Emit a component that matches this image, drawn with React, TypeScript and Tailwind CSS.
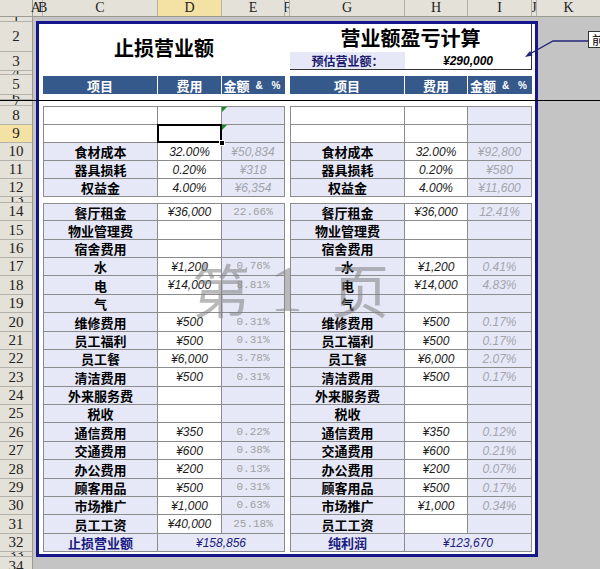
import React from 'react';

type RH = { n: string; h: string; sel?: boolean };

const h14 = [
  'h-[17px]', 'h-[19px]', 'h-[18px]', 'h-[18px]', 'h-[19px]', 'h-[18px]', 'h-[19px]', 'h-[18px]', 'h-[18px]', 'h-[19px]',
  'h-[18px]', 'h-[18px]', 'h-[19px]', 'h-[18px]', 'h-[19px]', 'h-[18px]', 'h-[18px]', 'h-[19px]', 'h-[18px]',
];
const rh14 = [
  'h-[18px]', 'h-[19px]', 'h-[18px]', 'h-[18px]', 'h-[19px]', 'h-[18px]', 'h-[19px]', 'h-[18px]', 'h-[18px]', 'h-[19px]',
  'h-[18px]', 'h-[18px]', 'h-[19px]', 'h-[18px]', 'h-[19px]', 'h-[18px]', 'h-[18px]', 'h-[19px]', 'h-[18px]',
];

const rowHeaders: RH[] = [
  { n: '1', h: 'h-[5px]' },
  { n: '2', h: 'h-[30px]' },
  { n: '3', h: 'h-[19px]' },
  { n: '4', h: 'h-[4px]' },
  { n: '5', h: 'h-[20px]' },
  { n: '6', h: 'h-[5px]' },
  { n: '7', h: 'h-[6px]' },
  { n: '8', h: 'h-[19px]' },
  { n: '9', h: 'h-[18px]', sel: true },
  { n: '10', h: 'h-[18px]' },
  { n: '11', h: 'h-[18px]' },
  { n: '12', h: 'h-[18px]' },
  { n: '13', h: 'h-[6px]' },
  ...rh14.map((h, i) => ({ n: String(14 + i), h })),
  { n: '33', h: 'h-[5px]' },
  { n: '34', h: 'h-[20px]' },
];

type Row = { c: string; d?: string; e?: string; h?: string; i?: string; mono?: boolean; cWhite?: boolean };

const block1: Row[] = [
  { c: '', cWhite: true },
  { c: '', cWhite: true },
  { c: '食材成本', d: '32.00%', e: '¥50,834', h: '32.00%', i: '¥92,800' },
  { c: '器具损耗', d: '0.20%', e: '¥318', h: '0.20%', i: '¥580' },
  { c: '权益金', d: '4.00%', e: '¥6,354', h: '4.00%', i: '¥11,600' },
];

const block2: Row[] = [
  { c: '餐厅租金', d: '¥36,000', e: '22.66%', h: '¥36,000', i: '12.41%', mono: true },
  { c: '物业管理费' },
  { c: '宿舍费用' },
  { c: '水', d: '¥1,200', e: '0.76%', h: '¥1,200', i: '0.41%', mono: true },
  { c: '电', d: '¥14,000', e: '8.81%', h: '¥14,000', i: '4.83%', mono: true },
  { c: '气' },
  { c: '维修费用', d: '¥500', e: '0.31%', h: '¥500', i: '0.17%', mono: true },
  { c: '员工福利', d: '¥500', e: '0.31%', h: '¥500', i: '0.17%', mono: true },
  { c: '员工餐', d: '¥6,000', e: '3.78%', h: '¥6,000', i: '2.07%', mono: true },
  { c: '清洁费用', d: '¥500', e: '0.31%', h: '¥500', i: '0.17%', mono: true },
  { c: '外来服务费' },
  { c: '税收' },
  { c: '通信费用', d: '¥350', e: '0.22%', h: '¥350', i: '0.12%', mono: true },
  { c: '交通费用', d: '¥600', e: '0.38%', h: '¥600', i: '0.21%', mono: true },
  { c: '办公费用', d: '¥200', e: '0.13%', h: '¥200', i: '0.07%', mono: true },
  { c: '顾客用品', d: '¥500', e: '0.31%', h: '¥500', i: '0.17%', mono: true },
  { c: '市场推广', d: '¥1,000', e: '0.63%', h: '¥1,000', i: '0.34%', mono: true },
  { c: '员工工资', d: '¥40,000', e: '25.18%', mono: true },
];

const LAV = 'bg-[#e6e8f8]';
const CJK = "font-['Noto_Sans_CJK_SC',sans-serif]";
const SANS = "font-['Liberation_Sans','Noto_Sans_CJK_SC',sans-serif]";
const MONO = "font-['Liberation_Mono',monospace]";
const SERIF = "font-['Liberation_Serif',serif]";

const labelCls = `${CJK} font-bold text-[13px] leading-none text-black`;
const dCls = `${SANS} italic text-[12px] leading-none text-[#1c1c1c]`;
const eItalic = `${SANS} italic text-[12px] leading-none text-[#a4a4ac]`;
const eMono = `${MONO} text-[11px] leading-none text-[#a0a0a0]`;

function Cell({ w, bg, children, extra }: { w: string; bg: string; children?: React.ReactNode; extra?: React.ReactNode }) {
  return (
    <div className={`relative ${w} ${bg} h-full flex items-center justify-center border-r border-[#8c8c8c]`}>
      {children}
      {extra}
    </div>
  );
}

const Tri = () => (
  <div className="absolute left-0 top-0 w-0 h-0 border-t-[5px] border-t-[#1a8c2a] border-r-[5px] border-r-transparent" />
);

const Sel = () => (
  <>
    <div className="absolute left-[-1px] top-[-1px] right-[-1px] bottom-[-1px] border-2 border-black z-10" />
    <div className="absolute right-[-4px] bottom-[-4px] w-[6px] h-[6px] bg-black border border-white z-20" />
  </>
);

function LeftRow({ r, h, idx, block }: { r: Row; h: string; idx: number; block: number }) {
  const isSel = block === 1 && idx === 1;
  const hasTri = block === 1 && (idx === 0 || idx === 1);
  return (
    <div className={`flex ${h} border-b border-[#8c8c8c]`}>
      <Cell w="w-[114px]" bg={r.cWhite ? 'bg-white' : LAV}>
        <span className={labelCls}>{r.c}</span>
      </Cell>
      <Cell w="w-[64px]" bg="bg-white" extra={isSel ? <Sel /> : null}>
        <span className={dCls}>{r.d}</span>
      </Cell>
      <Cell w="w-[63px]" bg={LAV} extra={hasTri ? <Tri /> : null}>
        <span className={r.mono ? eMono : eItalic}>{r.e}</span>
      </Cell>
    </div>
  );
}

function RightRow({ r, h }: { r: Row; h: string }) {
  return (
    <div className={`flex ${h} border-b border-[#8c8c8c]`}>
      <Cell w="w-[114px]" bg={r.cWhite ? 'bg-white' : LAV}>
        <span className={labelCls}>{r.c}</span>
      </Cell>
      <Cell w="w-[63px]" bg="bg-white">
        <span className={dCls}>{r.h}</span>
      </Cell>
      <Cell w="w-[64px]" bg={LAV}>
        <span className={eItalic}>{r.i}</span>
      </Cell>
    </div>
  );
}

function HeaderBlock({ right }: { right?: boolean }) {
  const hc = `${CJK} font-bold text-[13px] leading-none text-white`;
  return (
    <div className="flex w-[242px] h-full bg-[#36598c]">
      <div className="w-[115px] h-full flex items-center justify-center border-r border-white">
        <span className={hc}>项目</span>
      </div>
      <div className={`${right ? 'w-[63px]' : 'w-[64px]'} h-full flex items-center justify-center border-r border-white`}>
        <span className={hc}>费用</span>
      </div>
      <div className="flex-1 h-full flex items-center justify-center">
        <span className={hc}>金额</span>
        <span className={`${SANS} font-bold text-[10px] text-white ml-[6px] tracking-[3px]`}>&amp; %</span>
      </div>
    </div>
  );
}

export default function App() {
  const colHdr = `${SERIF} text-[14px] leading-none text-[#222]`;
  return (
    <div className={`relative w-[600px] h-[569px] overflow-hidden bg-[#c4c4c4] ${SANS}`}>
      {/* column headers */}
      <div className="flex h-[17px] bg-[#e3e1d8] border-b border-[#9c9a90]">
        <div className="w-[33px] h-full border-r border-[#9c9a90]" />
        <div className={`w-[10px] h-full border-r border-[#b4b2a8] flex items-center justify-center overflow-visible ${colHdr} tracking-[-3px]`}>AB</div>
        <div className={`w-[115px] h-full border-r border-[#b4b2a8] flex items-center justify-center ${colHdr}`}>C</div>
        <div className={`w-[64px] h-full border-r border-[#b4b2a8] bg-[#f4e2a4] flex items-center justify-center ${colHdr}`}>D</div>
        <div className={`w-[63px] h-full border-r border-[#b4b2a8] flex items-center justify-center ${colHdr}`}>E</div>
        <div className={`w-[5px] h-full border-r border-[#b4b2a8] flex items-center justify-center overflow-hidden ${colHdr}`}>F</div>
        <div className={`w-[115px] h-full border-r border-[#b4b2a8] flex items-center justify-center ${colHdr}`}>G</div>
        <div className={`w-[63px] h-full border-r border-[#b4b2a8] flex items-center justify-center ${colHdr}`}>H</div>
        <div className={`w-[64px] h-full border-r border-[#b4b2a8] flex items-center justify-center ${colHdr}`}>I</div>
        <div className={`w-[5px] h-full border-r border-[#b4b2a8] flex items-center justify-center overflow-hidden ${colHdr}`}>J</div>
        <div className={`flex-1 h-full flex items-center justify-center ${colHdr}`}>K</div>
      </div>

      <div className="flex">
        {/* row headers */}
        <div className="w-[33px] flex flex-col bg-[#e3e1d8] border-r border-[#9c9a90]">
          {rowHeaders.map((r) => (
            <div
              key={r.n}
              className={`${r.h} shrink-0 flex items-center justify-center overflow-hidden border-b border-[#b4b2a8] ${r.sel ? 'bg-[#f4e2a4]' : ''} ${SERIF} text-[15px] leading-none text-[#222]`}
            >
              {r.n}
            </div>
          ))}
        </div>

        {/* sheet */}
        <div className="flex-1 pl-[3px] pt-[4px]">
          <div className="w-[502px] h-[536px] border-[3px] border-[#16168c] bg-white pl-[4px] flex flex-col">
            {/* titles */}
            <div className="flex h-[46px] shrink-0">
              <div className="w-[242px] h-full flex items-center justify-center pt-[2px]">
                <span className={`${CJK} font-bold text-[20px] leading-none text-black`}>止损营业额</span>
              </div>
              <div className="w-[5px]" />
              <div className="w-[242px] h-full flex flex-col border-r border-b border-[#333]">
                <div className="h-[28px] flex items-center justify-center">
                  <span className={`${CJK} font-bold text-[20px] leading-none text-black`}>营业额盈亏计算</span>
                </div>
                <div className="flex-1 flex">
                  <div className={`w-[115px] h-full ${LAV} flex items-center justify-center`}>
                    <span className={`${CJK} font-bold text-[12px] leading-none text-[#1a1a70]`}>预估营业额：</span>
                  </div>
                  <div className="flex-1 h-full flex items-center justify-center">
                    <span className={`${SANS} font-bold italic text-[12px] leading-none text-black`}>¥290,000</span>
                  </div>
                </div>
              </div>
            </div>
            <div className="h-[6px] shrink-0" />
            {/* header row */}
            <div className="flex h-[18px] shrink-0">
              <HeaderBlock />
              <div className="w-[5px]" />
              <HeaderBlock right />
            </div>
            <div className="h-[12px] shrink-0" />
            {/* block 1 */}
            <div className="flex shrink-0">
              <div className="w-[242px] border-l border-t border-[#8c8c8c]">
                {block1.map((r, i) => (
                  <LeftRow key={i} r={r} h="h-[18px]" idx={i} block={1} />
                ))}
              </div>
              <div className="w-[5px]" />
              <div className="w-[242px] border-l border-t border-[#8c8c8c]">
                {block1.map((r, i) => (
                  <RightRow key={i} r={r} h="h-[18px]" />
                ))}
              </div>
            </div>
            <div className="h-[6px] shrink-0" />
            {/* block 2 */}
            <div className="flex shrink-0">
              <div className="w-[242px] border-l border-t border-[#8c8c8c]">
                {block2.map((r, i) => (
                  <LeftRow key={i} r={r} h={h14[i]} idx={i} block={2} />
                ))}
                <div className={`flex h-[18px] border-b border-[#8c8c8c]`}>
                  <div className={`w-[114px] h-full ${LAV} flex items-center justify-center border-r border-[#8c8c8c]`}>
                    <span className={`${CJK} font-bold text-[13px] leading-none text-[#1a1a80]`}>止损营业额</span>
                  </div>
                  <div className={`flex-1 h-full ${LAV} flex items-center justify-center border-r border-[#8c8c8c]`}>
                    <span className={`${SANS} italic text-[12px] leading-none text-[#1a1a80]`}>¥158,856</span>
                  </div>
                </div>
              </div>
              <div className="w-[5px]" />
              <div className="w-[242px] border-l border-t border-[#8c8c8c]">
                {block2.map((r, i) => (
                  <RightRow key={i} r={r} h={h14[i]} />
                ))}
                <div className={`flex h-[18px] border-b border-[#8c8c8c]`}>
                  <div className={`w-[114px] h-full ${LAV} flex items-center justify-center border-r border-[#8c8c8c]`}>
                    <span className={`${CJK} font-bold text-[13px] leading-none text-[#1a1a80]`}>纯利润</span>
                  </div>
                  <div className={`flex-1 h-full ${LAV} flex items-center justify-center border-r border-[#8c8c8c]`}>
                    <span className={`${SANS} italic text-[12px] leading-none text-[#1a1a80]`}>¥123,670</span>
                  </div>
                </div>
              </div>
            </div>
          </div>
        </div>
      </div>

      {/* frozen pane / page line */}
      <div className="absolute left-0 top-[100px] w-full h-px bg-black" />

      {/* watermark */}
      <div className="absolute left-[192px] top-[259px] pointer-events-none text-[rgba(128,128,128,0.55)]">
        <span className={`${CJK} text-[58px] leading-none`}>第</span>
      </div>
      <div className="absolute left-[270px] top-[256px] pointer-events-none text-[rgba(128,128,128,0.55)]">
        <span className={`${SERIF} text-[66px] leading-none`}>1</span>
      </div>
      <div className="absolute left-[331px] top-[259px] pointer-events-none text-[rgba(128,128,128,0.55)]">
        <span className={`${CJK} text-[58px] leading-none`}>页</span>
      </div>

      {/* comment arrow */}
      <svg className="absolute left-0 top-0" width="600" height="80" viewBox="0 0 600 80">
        <polyline points="589,41 553,41 528,55" fill="none" stroke="#22227a" strokeWidth="1.3" />
        <polygon points="525,57 532.6,55.6 530,51" fill="#22227a" />
      </svg>
      <div className="absolute left-[588px] top-[31px] w-[20px] h-[17px] bg-white border border-[#333] flex items-center pl-[3px]">
        <span className={`${CJK} text-[12px] leading-none text-black`}>前</span>
      </div>
    </div>
  );
}
